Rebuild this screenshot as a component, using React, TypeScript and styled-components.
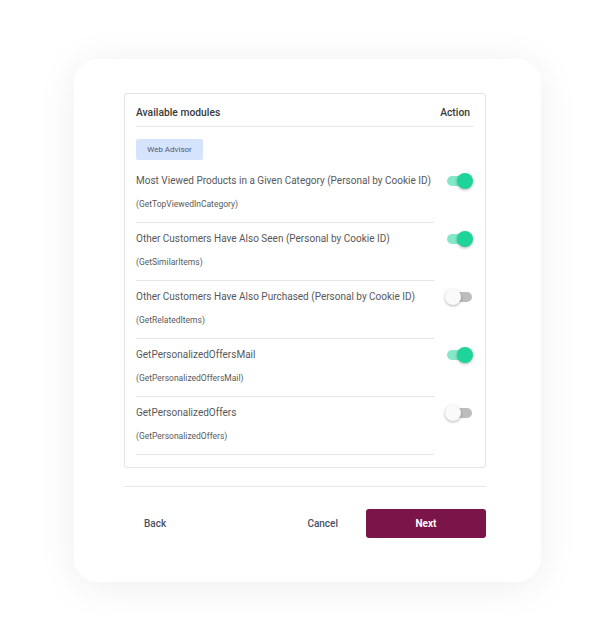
import React, { useState } from 'react'
import styled, { createGlobalStyle, css } from 'styled-components'

const GlobalStyle = createGlobalStyle`
    html, body {
        margin: 0;
        padding: 0;
        background: #ffffff;
        font-family: Roboto, "Liberation Sans", Arial, sans-serif;
    }
    * {
        box-sizing: border-box;
    }
`

const Page = styled.div`
    width: 600px;
    height: 634px;
    padding: 59px 0 0 74px;
`

const Card = styled.div`
    width: 467px;
    background: #fff;
    border-radius: 24px;
    box-shadow: 0 4px 40px rgba(0, 0, 0, 0.07);
    padding: 34px 55px 44px 50px;
`

const ModulesBox = styled.div`
    border: 1px solid #e3e3e3;
    border-radius: 3px;
    padding: 0 11px 12px 11px;
`

const HeaderRow = styled.div`
    display: flex;
    justify-content: space-between;
    align-items: center;
    height: 33px;
    padding-top: 5px;
    border-bottom: 1px solid #e8e8e8;
    font-size: 10.3px;
    font-weight: 500;
    color: #3a3a3a;

    span:last-child {
        padding-right: 4px;
    }
`

const Chip = styled.div`
    display: inline-flex;
    align-items: center;
    justify-content: center;
    margin-top: 12px;
    width: 67px;
    height: 21px;
    border-radius: 2px;
    background: #d5e3fc;
    color: #4f5a73;
    font-size: 8px;
`

const List = styled.ul`
    list-style: none;
    margin: 0;
    padding: 0;
    padding-top: 5px;
`

const Row = styled.li`
    display: flex;
    align-items: flex-start;
`

const RowText = styled.div`
    width: 298px;
    height: 58px;
    border-bottom: 1px solid #e6e6e6;
    padding-top: 9px;
    display: flex;
    flex-direction: column;
    color: #585858;
`

const Title = styled.div`
    font-size: 10px;
    line-height: 14px;
    white-space: nowrap;
`

const Subtitle = styled.div`
    margin-top: 10px;
    font-size: 8.5px;
    line-height: 12px;
    color: #5a5a5a;
`

const SwitchWrap = styled.button<{ on: boolean }>`
    position: relative;
    margin: 8px 0 0 13px;
    width: 25px;
    height: 16px;
    padding: 0;
    border: 0;
    background: transparent;
    cursor: pointer;

    &::before {
        content: '';
        position: absolute;
        left: 0;
        top: 3px;
        width: 25px;
        height: 10px;
        border-radius: 5px;
        background: ${p => (p.on ? 'rgba(30, 212, 154, 0.55)' : '#bdbdbd')};
    }
`

const Thumb = styled.span<{ on: boolean }>`
    position: absolute;
    top: 0;
    width: 16px;
    height: 16px;
    border-radius: 50%;
    box-shadow: 0 1px 3px rgba(0, 0, 0, 0.3);
    ${p => p.on ? css`
        left: 10px;
        background: #1ed49a;
    ` : css`
        left: -2px;
        background: #fafafa;
    `}
`

const Divider = styled.div`
    height: 1px;
    background: #e8e8e8;
    margin-top: 18px;
`

const Footer = styled.div`
    display: flex;
    align-items: center;
    gap: 8px;
    margin-top: 22px;
`

const Button = styled.button<{ primary?: boolean }>`
    height: 29px;
    border: 0;
    border-radius: 3px;
    padding: 0 20px;
    font-family: inherit;
    font-size: 10px;
    font-weight: 500;
    color: #4a5066;
    background: transparent;
    cursor: pointer;

    &:first-child {
        margin-right: auto;
    }

    ${p => p.primary && css`
        width: 120px;
        background: #7b1449;
        color: #fff;
        font-weight: 700;
    `}
`

type Module = {
    title: string
    code: string
    enabled: boolean
}

const initialModules: Module[] = [
    { title: 'Most Viewed Products in a Given Category (Personal by Cookie ID)', code: 'GetTopViewedInCategory', enabled: true },
    { title: 'Other Customers Have Also Seen (Personal by Cookie ID)', code: 'GetSimilarItems', enabled: true },
    { title: 'Other Customers Have Also Purchased (Personal by Cookie ID)', code: 'GetRelatedItems', enabled: false },
    { title: 'GetPersonalizedOffersMail', code: 'GetPersonalizedOffersMail', enabled: true },
    { title: 'GetPersonalizedOffers', code: 'GetPersonalizedOffers', enabled: false },
]

const App: React.FC = () => {
    const [modules, setModules] = useState(initialModules)

    const toggle = (i: number) => {
        setModules(p => p.map((m, idx) => idx === i ? { ...m, enabled: !m.enabled } : m))
    }

    return <>
        <GlobalStyle />
        <Page>
            <Card>
                <ModulesBox>
                    <HeaderRow>
                        <span>Available modules</span>
                        <span>Action</span>
                    </HeaderRow>
                    <Chip>Web Advisor</Chip>
                    <List>
                        {modules.map((m, i) => <Row key={m.code}>
                            <RowText>
                                <Title>{m.title}</Title>
                                <Subtitle>({m.code})</Subtitle>
                            </RowText>
                            <SwitchWrap on={m.enabled} onClick={() => toggle(i)}>
                                <Thumb on={m.enabled} />
                            </SwitchWrap>
                        </Row>)}
                    </List>
                </ModulesBox>
                <Divider />
                <Footer>
                    <Button>Back</Button>
                    <Button>Cancel</Button>
                    <Button primary>Next</Button>
                </Footer>
            </Card>
        </Page>
    </>
}

export default App
